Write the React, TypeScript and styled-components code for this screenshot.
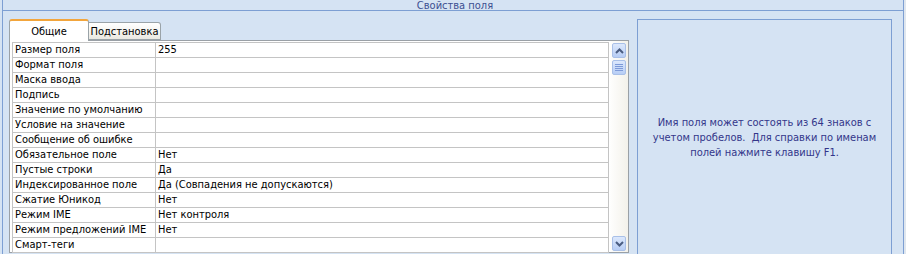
import React from "react";
import styled, { createGlobalStyle } from "styled-components";

const Global = createGlobalStyle`
  html, body { margin: 0; padding: 0; background: #ffffff; }
  body { width: 906px; height: 258px; overflow: hidden; font-family: "DejaVu Sans Condensed", "DejaVu Sans", Tahoma, sans-serif; }
`;

const Page = styled.div`
  width: 906px;
  height: 254px;
  background: linear-gradient(to right, #d5e3f3 0, #d5e3f3 904px, #dfe6ee 904px);
  display: flex;
  flex-direction: column;
`;

const Frame = styled.div`
  margin-left: 2px;
  width: 900px;
  height: 254px;
  border-left: 1px solid #7d9fd3;
  border-right: 1px solid #7d9fd3;
  background: #d5e3f3;
  display: flex;
  flex-direction: column;
`;

const Header = styled.div`
  height: 10px;
  border-bottom: 1px solid #7d9fd3;
  overflow: hidden;
  display: flex;
  justify-content: center;
  align-items: flex-end;
  color: #3c4f91;
  font-size: 11px;
  line-height: 13px;
`;

const HeaderText = styled.span`
  display: block;
  margin-bottom: -2px;
  padding-left: 4px;
`;

const Body = styled.div`
  flex: 1;
  display: flex;
  padding: 8px 0 0 6px;
  gap: 8px;
`;

const LeftPanel = styled.div`
  width: 620px;
  display: flex;
  flex-direction: column;
`;

const TabStrip = styled.div`
  height: 21px;
  display: flex;
  align-items: flex-end;
`;

const Tab = styled.div<{ $active?: boolean }>`
  box-sizing: border-box;
  height: ${(p) => (p.$active ? 22 : 18)}px;
  width: ${(p) => (p.$active ? 80 : 72)}px;
  margin-bottom: ${(p) => (p.$active ? -1 : 0)}px;
  background: ${(p) =>
    p.$active ? "#ffffff" : "linear-gradient(to bottom, #ffffff 0%, #f4f3ee 60%, #e9e8e2 100%)"};
  border: 1px solid #9aa3a8;
  border-bottom: ${(p) => (p.$active ? "none" : "1px solid #9aa3a8")};
  border-top: ${(p) => (p.$active ? "2px solid #f2a53c" : "1px solid #9aa3a8")};
  border-radius: ${(p) => (p.$active ? "3px 3px 0 0" : "0 3px 0 0")};
  border-left: ${(p) => (p.$active ? "1px solid #9aa3a8" : "none")};
  font-size: 11px;
  color: #000;
  display: flex;
  justify-content: center;
  align-items: center;
  padding-top: ${(p) => (p.$active ? 0 : 1)}px;
  position: relative;
  z-index: ${(p) => (p.$active ? 1 : 0)};
`;

const GridBox = styled.div`
  box-sizing: border-box;
  height: 213px;
  border: 1px solid #9aa0a6;
  background: #ffffff;
  display: flex;
  padding: 1px 0 0 2px;
`;

const Rows = styled.div`
  width: 597px;
  display: flex;
  flex-direction: column;
`;

const Row = styled.div`
  height: 15px;
  box-sizing: border-box;
  display: grid;
  grid-template-columns: 143px 1fr;
  border-bottom: 1px solid #c4c4c4;
  border-right: 1px solid #c4c4c4;
  border-left: 1px solid #c4c4c4;
  font-size: 11px;
  line-height: 14px;
  color: #000;
  &:first-child { border-top: 1px solid #c4c4c4; height: 16px; }
`;

const Cell = styled.div<{ $label?: boolean }>`
  padding-left: 2px;
  white-space: nowrap;
  overflow: hidden;
  border-right: ${(p) => (p.$label ? "1px solid #c4c4c4" : "none")};
`;

const ScrollBar = styled.div`
  width: 18px;
  margin-left: 1px;
  margin-top: -1px;
  background: linear-gradient(to right, #fefefd, #f3f1ea);
  display: flex;
  flex-direction: column;
  align-items: center;
  padding-top: 2px;
  box-sizing: border-box;
`;

const SBtn = styled.div<{ $mt?: number; $mb?: number }>`
  width: 14px;
  height: 15px;
  margin-top: ${(p) => p.$mt ?? 0}px;
  margin-bottom: ${(p) => p.$mb ?? 0}px;
  box-sizing: border-box;
  border: 1px solid #a9c0e8;
  border-radius: 2px;
  background: linear-gradient(to bottom, #dce8fc, #b7cdf5);
  display: flex;
  align-items: center;
  justify-content: center;
`;

const Spacer = styled.div`
  flex: 1;
`;

const HelpPanel = styled.div`
  box-sizing: border-box;
  width: 255px;
  height: 235px;
  border: 1px solid #7d9fd3;
  border-bottom: none;
  display: flex;
  align-items: center;
  justify-content: center;
  text-align: center;
  color: #33368a;
  font-size: 11px;
  line-height: 15px;
  padding: 0 4px;
  white-space: nowrap;
`;

const rows: [string, string][] = [
  ["Размер поля", "255"],
  ["Формат поля", ""],
  ["Маска ввода", ""],
  ["Подпись", ""],
  ["Значение по умолчанию", ""],
  ["Условие на значение", ""],
  ["Сообщение об ошибке", ""],
  ["Обязательное поле", "Нет"],
  ["Пустые строки", "Да"],
  ["Индексированное поле", "Да (Совпадения не допускаются)"],
  ["Сжатие Юникод", "Нет"],
  ["Режим IME", "Нет контроля"],
  ["Режим предложений IME", "Нет"],
  ["Смарт-теги", ""],
];

const UpArrow = () => (
  <svg width="9" height="6" viewBox="0 0 9 6">
    <path d="M1 5 L4.5 1.5 L8 5" fill="none" stroke="#4a5d82" strokeWidth="2" />
  </svg>
);
const DownArrow = () => (
  <svg width="9" height="6" viewBox="0 0 9 6">
    <path d="M1 1 L4.5 4.5 L8 1" fill="none" stroke="#4a5d82" strokeWidth="2" />
  </svg>
);
const Grip = () => (
  <svg width="8" height="7" viewBox="0 0 8 7">
    <path d="M0 0.5 H8 M0 2.5 H8 M0 4.5 H8 M0 6.5 H8" stroke="#7d9ad8" strokeWidth="1" />
  </svg>
);

export default function App() {
  return (
    <>
      <Global />
      <Page>
        <Frame>
          <Header>
            <HeaderText>Свойства поля</HeaderText>
          </Header>
          <Body>
            <LeftPanel>
              <TabStrip>
                <Tab $active>Общие</Tab>
                <Tab>Подстановка</Tab>
              </TabStrip>
              <GridBox>
                <Rows>
                  {rows.map(([l, v]) => (
                    <Row key={l}>
                      <Cell $label>{l}</Cell>
                      <Cell>{v}</Cell>
                    </Row>
                  ))}
                </Rows>
                <ScrollBar>
                  <SBtn>
                    <UpArrow />
                  </SBtn>
                  <SBtn $mt={2}>
                    <Grip />
                  </SBtn>
                  <Spacer />
                  <SBtn $mb={1}>
                    <DownArrow />
                  </SBtn>
                </ScrollBar>
              </GridBox>
            </LeftPanel>
            <HelpPanel>
              <div>
                Имя поля может состоять из 64 знаков с<br />
                учетом пробелов.&nbsp; Для справки по именам<br />
                полей нажмите клавишу F1.
              </div>
            </HelpPanel>
          </Body>
        </Frame>
      </Page>
    </>
  );
}
